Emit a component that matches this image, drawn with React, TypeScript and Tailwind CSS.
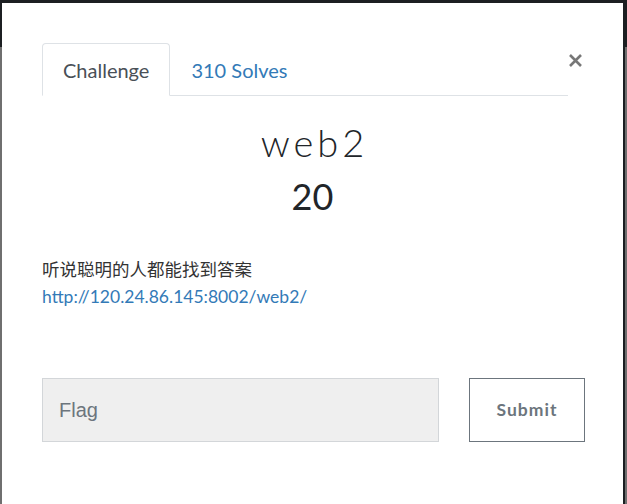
import { useState } from "react";

const sans = { fontFamily: "Lato, 'Noto Sans CJK SC', sans-serif" };

export default function App() {
  const [tab, setTab] = useState<"challenge" | "solves">("challenge");
  const [flag, setFlag] = useState("");

  const tabClass = (active: boolean) =>
    active
      ? "h-[53px] px-[20px] text-[20px] text-[#495057] bg-white border border-[#dee2e6] border-b-white rounded-t-[4px]"
      : "h-[53px] px-[20px] text-[20px] text-[#337ab7] border border-transparent";

  return (
    <div className="w-[627px] h-[504px] bg-[#1c1f22] flex overflow-hidden" style={sans}>
      <div className="w-[2px] flex flex-col">
        <div className="h-[47px]" />
        <div className="flex-1 bg-[#6f6f6f]" />
      </div>

      <div className="mt-[3px] w-[621px] h-[501px] bg-white px-[40px] pt-[40px]">
        <div className="flex">
          <ul className="flex-1 flex border-b border-[#dee2e6]">
            <li className="-mb-px">
              <button onClick={() => setTab("challenge")} className={tabClass(tab === "challenge")}>
                Challenge
              </button>
            </li>
            <li className="-mb-px">
              <button onClick={() => setTab("solves")} className={tabClass(tab === "solves")}>
                310 Solves
              </button>
            </li>
          </ul>
          <button className="w-[15px] h-[15px] mt-[10px] text-[#777]" aria-label="Close">
            <svg viewBox="0 0 15 15" className="w-[15px] h-[15px]">
              <path d="M2 2 L13 13 M13 2 L2 13" stroke="currentColor" strokeWidth="2.6" />
            </svg>
          </button>
        </div>

        <div className="text-center text-[#212529]">
          <h3 className="mt-[26px] text-[38px] leading-[40px] font-light tracking-[4px] pl-[4px]">web2</h3>
          <h4 className="mt-[14px] text-[36px] leading-[40px]">20</h4>
        </div>

        <div className="mt-[40px] text-[17.5px] leading-[27px] text-[#333]">
          <p>听说聪明的人都能找到答案</p>
          <a href="#" className="text-[#337ab7]">
            http://120.24.86.145:8002/web2/
          </a>
        </div>

        <div className="mt-[68px] flex gap-[30px]">
          <input
            value={flag}
            onChange={(e) => setFlag(e.target.value)}
            placeholder="Flag"
            className="shrink-0 w-[397px] h-[64px] px-[16px] bg-[#efefef] border border-[#d3d6d9] text-[20px] placeholder:text-[#6c757d] outline-none"
            style={{ fontFamily: "'Liberation Sans', Arial, sans-serif" }}
          />
          <button className="shrink-0 w-[116px] h-[64px] border border-[#6c757d] text-[17.5px] font-bold tracking-[1px] text-[#6c757d]">
            Submit
          </button>
        </div>
      </div>

      <div className="flex-1 flex">
        <div className="w-[2px]" />
        <div className="w-[2px] flex flex-col">
          <div className="h-[47px]" />
          <div className="flex-1 bg-[#6f6f6f]" />
        </div>
      </div>
    </div>
  );
}
